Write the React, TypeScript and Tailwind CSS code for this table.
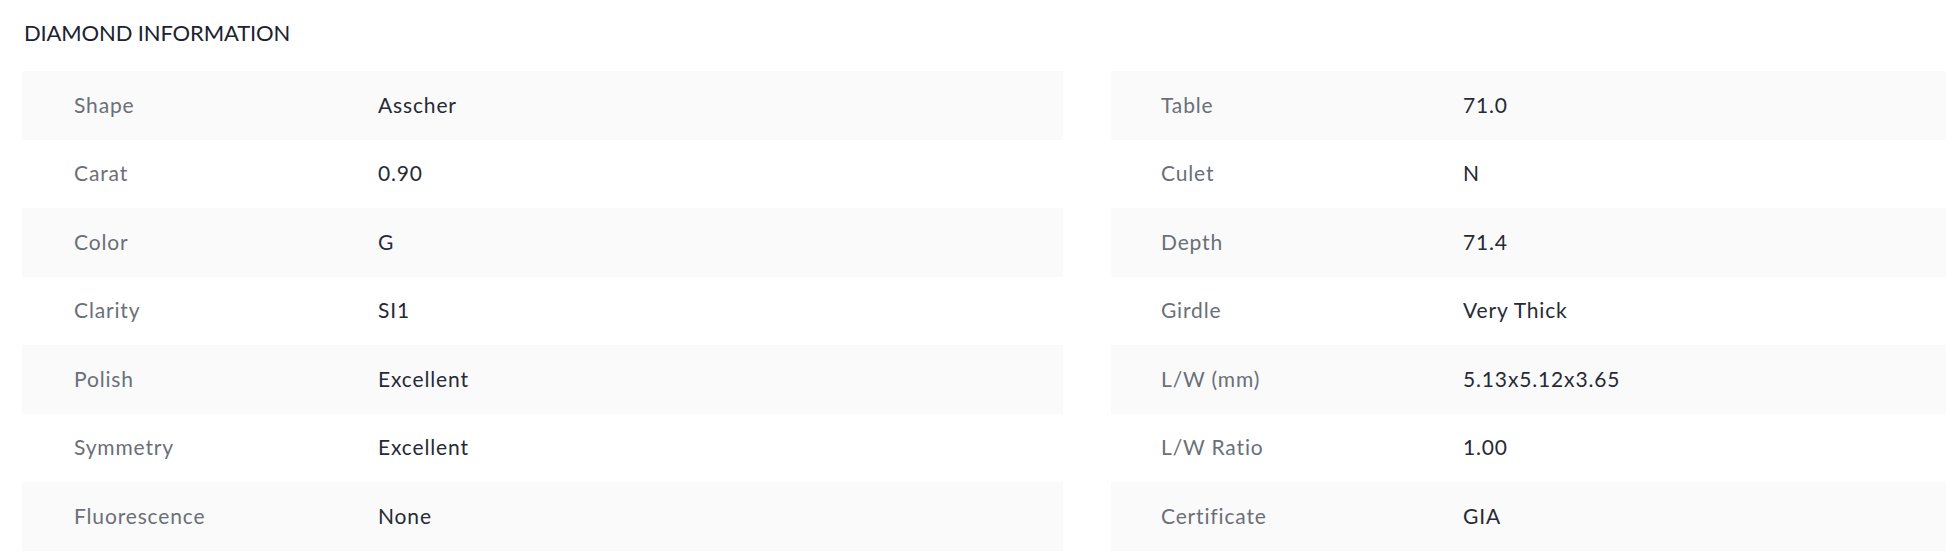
import React from "react";

type Spec = { label: string; value: string };

const leftSpecs: Spec[] = [
  { label: "Shape", value: "Asscher" },
  { label: "Carat", value: "0.90" },
  { label: "Color", value: "G" },
  { label: "Clarity", value: "SI1" },
  { label: "Polish", value: "Excellent" },
  { label: "Symmetry", value: "Excellent" },
  { label: "Fluorescence", value: "None" },
];

const rightSpecs: Spec[] = [
  { label: "Table", value: "71.0" },
  { label: "Culet", value: "N" },
  { label: "Depth", value: "71.4" },
  { label: "Girdle", value: "Very Thick" },
  { label: "L/W (mm)", value: "5.13x5.12x3.65" },
  { label: "L/W Ratio", value: "1.00" },
  { label: "Certificate", value: "GIA" },
];

const SpecTable = ({ specs, labelClass }: { specs: Spec[]; labelClass: string }) => {
  return (
    <div className="flex flex-col w-[1041px] shrink-0">
      {specs.map((s, i) => (
        <div key={s.label} className={`flex items-center h-[68.5px] pb-[2px] ${i % 2 === 0 ? "bg-[#fafafa]" : "bg-white"}`}>
          {/* label column */}
          <span className={`${labelClass} text-[21px] tracking-[0.85px] text-[#6a6f78]`}>{s.label}</span>
          {/* value */}
          <span className="text-[21px] tracking-[0.85px] text-[#262a35]">{s.value}</span>
        </div>
      ))}
    </div>
  );
};

const App = () => {
  return (
    <div className="w-full h-[557px] overflow-hidden bg-white font-['Lato',sans-serif]">
      <div className="pl-[22px] pt-[19px]">
        <h2 className="pl-[2px] text-[22px] leading-[28px] text-[#1d2230] tracking-[-0.15px]">DIAMOND INFORMATION</h2>

        <div className="flex gap-12 mt-[24px]">
          <SpecTable specs={leftSpecs} labelClass="pl-[52px] w-[356px] shrink-0" />
          <SpecTable specs={rightSpecs} labelClass="pl-[50px] w-[352px] shrink-0" />
        </div>
      </div>
    </div>
  );
};

export default App;
